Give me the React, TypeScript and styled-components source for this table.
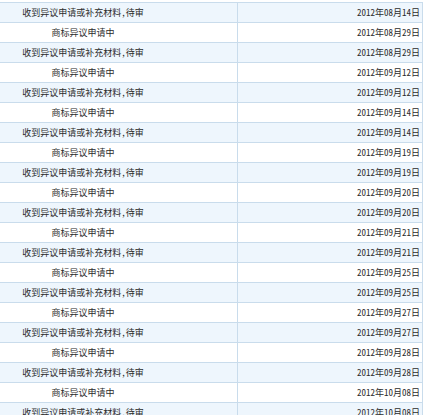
import React from "react";
import styled, { createGlobalStyle } from "styled-components";

const Global = createGlobalStyle`
  html, body { margin: 0; padding: 0; background: #ffffff; }
  body { font-family: "Noto Sans CJK SC", "Noto Sans", sans-serif; }
`;

const Table = styled.div`
  margin-top: 2px;
  width: 423px;
  border-top: 1px solid #c9dcec;
  border-right: 1px solid #c9dcec;
  box-sizing: border-box;
`;

const Row = styled.div<{ $alt: boolean }>`
  display: grid;
  grid-template-columns: 237px 1fr;
  height: 20px;
  box-sizing: border-box;
  border-bottom: 1px solid #c9dcec;
  background: ${(p) => (p.$alt ? "#eef6fd" : "#ffffff")};
`;

const Cell = styled.div<{ $align: "center" | "right" }>`
  display: flex;
  align-items: center;
  justify-content: ${(p) => (p.$align === "center" ? "center" : "flex-end")};
  padding: ${(p) => (p.$align === "center" ? "0 71px 0 0" : "0 2px 0 0")};
  font-size: 9px;
  line-height: 19px;
  color: #2b2b2b;
  white-space: nowrap;
  font-feature-settings: "hwid";
  & + & { border-left: 1px solid #c9dcec; }
`;

const dates = [
  "08月14日", "08月29日", "08月29日", "09月12日", "09月12日", "09月14日",
  "09月14日", "09月19日", "09月19日", "09月20日", "09月20日", "09月21日",
  "09月21日", "09月25日", "09月25日", "09月27日", "09月27日", "09月28日",
  "09月28日", "10月08日", "10月08日",
];

export default function App() {
  return (
    <>
      <Global />
      <Table>
        {dates.map((d, i) => (
          <Row key={i} $alt={i % 2 === 0}>
            <Cell $align="center">
              {i % 2 === 0 ? "收到异议申请或补充材料，待审" : "商标异议申请中"}
            </Cell>
            <Cell $align="right">2012年{d}</Cell>
          </Row>
        ))}
      </Table>
    </>
  );
}
